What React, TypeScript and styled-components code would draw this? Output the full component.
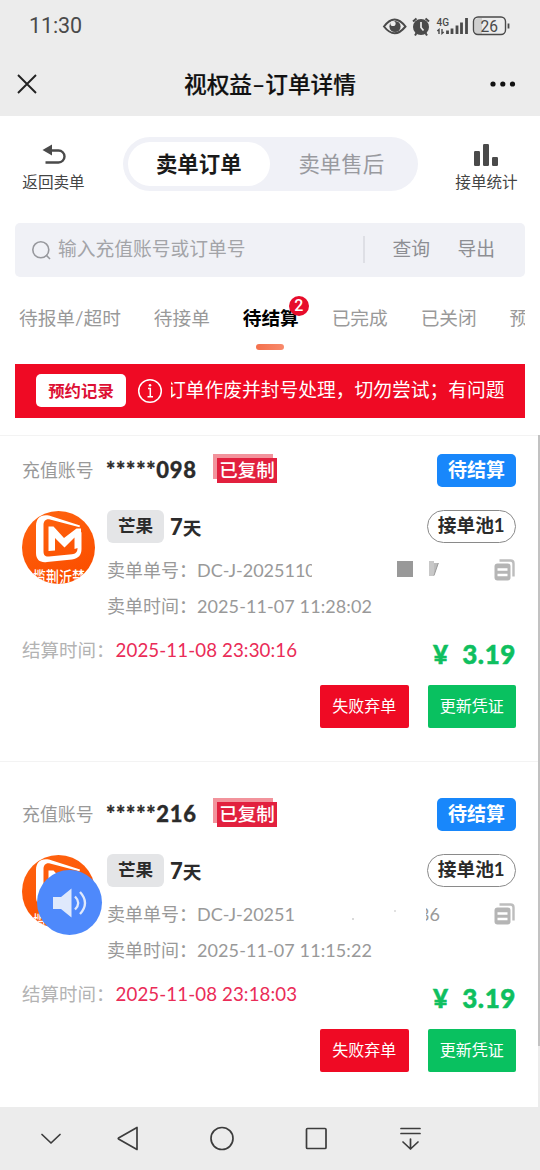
import React from "react";
import styled, { createGlobalStyle, css } from "styled-components";

const GlobalStyle = createGlobalStyle`
  * { box-sizing: border-box; }
  html, body { margin: 0; padding: 0; background: #fff; }
  body { font-family: Lato, "Noto Sans CJK SC", sans-serif; color: #2b2b2b; overflow: hidden; }
  button { font: inherit; border: 0; padding: 0; background: none; }
`;

const Screen = styled.div`
  width: 540px;
  height: 1170px;
  display: flex;
  flex-direction: column;
  overflow: hidden;
  background: #fff;
`;

const StatusBar = styled.div`
  height: 52px;
  flex: none;
  display: flex;
  align-items: center;
  justify-content: space-between;
  padding: 0 30px 0 29px;
  background: #ececec;
  color: #4a4a4a;
`;

const Clock = styled.span`
  font-family: Roboto, sans-serif;
  font-size: 21.5px;
  letter-spacing: -0.1px;
  line-height: 54px;
`;

const StatusIcons = styled.div`
  display: flex;
  align-items: center;
  height: 50px;
`;

const TitleBar = styled.header`
  height: 64px;
  flex: none;
  display: grid;
  grid-template-columns: 60px 1fr 60px;
  align-items: center;
  background: #ececec;
`;

const PageTitle = styled.h1`
  margin: 0;
  text-align: center;
  font-size: 22.7px;
  font-weight: 500;
  line-height: 59px;
  color: #111;
  -webkit-text-stroke: 0.2px #111;
`;

const TitleIcon = styled.div<{ $end?: boolean }>`
  display: flex;
  justify-content: ${(p) => (p.$end ? "flex-end" : "flex-start")};
  padding: ${(p) => (p.$end ? "0 24px 0 0" : "0 0 0 17px")};
`;

const Toolbar = styled.div`
  height: 107px;
  flex: none;
  display: flex;
  align-items: flex-start;
  justify-content: space-between;
  padding: 21px 22px 0;
`;

const ToolButton = styled.button`
  display: flex;
  flex-direction: column;
  align-items: center;
  padding-top: 6px;
  width: 63px;
  font-size: 15.6px;
  line-height: 22px;
  color: #444;
  white-space: nowrap;
  svg { margin-bottom: 2px; }
`;

const Segmented = styled.div`
  display: flex;
  width: 295px;
  height: 54px;
  padding: 5px;
  border-radius: 27px;
  background: #f0f1f7;
`;

const Segment = styled.button<{ $active?: boolean }>`
  width: 142.5px;
  height: 44px;
  border-radius: 22px;
  font-size: 21.4px;
  line-height: 42px;
  ${(p) =>
    p.$active
      ? css`background: #fff; color: #1a1a1a; font-weight: 700;`
      : css`color: #999a9f;`}
`;

const SearchBar = styled.div`
  flex: none;
  display: flex;
  align-items: center;
  height: 53.5px;
  margin: 0 15px;
  padding-left: 16px;
  border-radius: 5px;
  background: #f0f1f6;
  font-size: 18.75px;
  line-height: 50px;
  color: #a3a4a8;
`;

const Placeholder = styled.span`
  width: 305px;
  margin-left: 6px;
  padding-bottom: 2px;
`;

const Divider = styled.i`
  width: 1.5px;
  height: 27px;
  background: #dedfe5;
`;

const SearchAction = styled.button`
  width: 37px;
  margin-left: 28px;
  padding-bottom: 2px;
  color: #8d8e93;
  white-space: nowrap;
`;

const Tabs = styled.nav`
  flex: none;
  display: flex;
  height: 87px;
  margin-right: 15px;
  padding-left: 19px;
  overflow: hidden;
  gap: 32.9px;
`;

const Tab = styled.div<{ $active?: boolean }>`
  position: relative;
  flex: none;
  display: flex;
  flex-direction: column;
  align-items: center;
  padding-top: 28px;
  font-size: 18.7px;
  line-height: 26px;
  white-space: nowrap;
  color: ${(p) => (p.$active ? "#000" : "#999")};
  font-weight: ${(p) => (p.$active ? 700 : 400)};
`;

const Underline = styled.i`
  width: 28px;
  height: 6px;
  margin: 13px 2px 0 0;
  border-radius: 3px;
  background: linear-gradient(90deg, #f4704c, #f88a6c);
`;

const CountBadge = styled.b`
  position: absolute;
  right: -10px;
  top: 19px;
  width: 20px;
  height: 20px;
  border-radius: 50%;
  background: #e70c2b;
  color: #fff;
  font: 500 16px/20px Roboto, sans-serif;
  text-align: center;
`;

const Notice = styled.div`
  flex: none;
  display: flex;
  align-items: center;
  height: 54px;
  margin: 0 15px 17px;
  padding-left: 21px;
  background: #ef0a24;
  color: #fff;
`;

const NoticeButton = styled.button`
  width: 90px;
  height: 33px;
  border-radius: 5px;
  background: #fff;
  color: #dd1034;
  font-size: 16.4px;
  font-weight: 700;
  line-height: 31px;
`;

const InfoMark = styled.svg`
  margin-left: 11px;
`;

const Marquee = styled.div`
  display: flex;
  justify-content: flex-end;
  width: 333.5px;
  margin-left: 8px;
  overflow: hidden;
  font-size: 18.75px;
  line-height: 50px;
  padding-bottom: 2px;
  white-space: nowrap;
`;

const ListArea = styled.main`
  flex: 1;
  display: flex;
  min-height: 0;
`;

const List = styled.div`
  width: 537.5px;
  flex: none;
`;

const ScrollTrack = styled.div`
  flex: 1;
  background: #ececec;
`;

const ScrollThumb = styled.div`
  height: 611px;
  background: #c2c2c2;
`;

const Card = styled.article`
  height: 326px;
  padding: 18.5px 21.5px 0 22px;
  border-top: 1px solid #f3f3f3;
  & + & { padding-top: 36.5px; height: 346px; }
`;

const CardHead = styled.div`
  display: flex;
  align-items: center;
  height: 33px;
`;

const AccountLabel = styled.span`
  width: 84px;
  font-size: 17.9px;
  line-height: 33px;
  color: #999;
`;

const Account = styled.strong`
  width: 111px;
  font-size: 22px;
  font-weight: 900;
  letter-spacing: 0.7px;
  line-height: 30px;
  padding-bottom: 2px;
  color: #2b2b2b;
  -webkit-text-stroke: 0.3px #2b2b2b;
`;

const CopiedStamp = styled.span`
  width: 60px;
  height: 25px;
  margin-top: -1px;
  background: #e2203e;
  box-shadow: -4px -4px 0 #f2939c;
  color: #fff;
  font-size: 18.5px;
  font-weight: 500;
  line-height: 24px;
  text-align: center;
`;

const StateTag = styled.span`
  width: 79px;
  height: 33px;
  margin-left: auto;
  border-radius: 5px;
  background: #1887fb;
  color: #fff;
  font-size: 19px;
  font-weight: 700;
  line-height: 31px;
  text-align: center;
`;

const Product = styled.div`
  display: flex;
  margin-top: 23px;
  height: 114px;
`;

const AvatarBox = styled.div`
  position: relative;
  width: 73px;
  height: 73px;
  margin: 1px 12px 0 0;
  svg { display: block; }
`;

const VoiceBubble = styled.div`
  position: absolute;
  left: 15px;
  top: 15px;
  width: 65px;
  height: 65px;
  border-radius: 50%;
  background: #4e89fb;
  display: flex;
  align-items: center;
  justify-content: center;
`;

const Details = styled.div`
  flex: 1;
`;

const NameRow = styled.div`
  display: flex;
  align-items: center;
  height: 33px;
  margin-bottom: 8.5px;
  font-weight: 700;
`;

const Brand = styled.span`
  width: 57px;
  height: 33px;
  border-radius: 6px;
  background: #e4e5e7;
  font-size: 17.6px;
  line-height: 31px;
  text-align: center;
`;

const Term = styled.span`
  margin-left: 6px;
  font-size: 18.7px;
  font-weight: 700;
  line-height: 33px;
  padding-top: 2px;
  span { font-size: 22px; font-weight: 900; }
`;

const Pool = styled.span`
  width: 89.5px;
  height: 33px;
  margin-left: auto;
  border: 1px solid #8a8a8a;
  border-radius: 17px;
  font-size: 18.7px;
  line-height: 29px;
  text-align: center;
`;

const InfoLine = styled.div`
  display: flex;
  align-items: center;
  height: 36px;
  font-size: 18px;
  line-height: 34px;
  color: #999;
`;

const InfoLabel = styled.span`
  width: 90px;
  flex: none;
  white-space: nowrap;
`;

const Stamp = styled.span`
  white-space: nowrap;
  letter-spacing: 0.1px;
`;

const Cut = styled.span<{ $w: number; $end?: boolean }>`
  display: flex;
  justify-content: ${(p) => (p.$end ? "flex-end" : "flex-start")};
  width: ${(p) => p.$w}px;
  overflow: hidden;
  white-space: nowrap;
`;

const CopyIcon = styled.svg`
  margin-left: auto;
`;

const Settle = styled.div`
  display: flex;
  justify-content: space-between;
  height: 52px;
  margin-top: 9px;
  font-size: 18.5px;
  line-height: 35px;
  color: #b3b3b3;
`;

const SettleLabel = styled.span`
  display: inline-block;
  width: 93.5px;
  white-space: nowrap;
`;

const SettleTime = styled.span`
  color: #ea2c57;
  font-size: 18.7px;
  letter-spacing: 0.1px;
`;

const Price = styled.strong`
  color: #0fbf5f;
  font-size: 26px;
  font-weight: 900;
  letter-spacing: 0.6px;
  line-height: 43px;
  white-space: pre;
  -webkit-text-stroke: 0.5px #0fbf5f;
`;

const Actions = styled.div`
  display: flex;
  justify-content: flex-end;
  gap: 19px;
`;

const ActionButton = styled.button<{ $tone: string }>`
  width: 88.5px;
  height: 43px;
  border-radius: 2px;
  background: ${(p) => p.$tone};
  color: #fff;
  font-size: 16px;
  line-height: 40px;
  padding-bottom: 2px;
`;

const NavBar = styled.footer`
  height: 63px;
  flex: none;
  background: #ececec;
  svg { display: block; }
`;

function StatusGlyphs() {
  return (
    <svg width="128" height="26" viewBox="0 0 128 26" fill="none" stroke="#4a4a4a">
      <path d="M2 13.500Q12.500-.5 23.500 13.500Q12.500 27 2 13.500Z" strokeWidth="2" />
      <circle cx="13" cy="13.500" r="5.600" fill="#4a4a4a" stroke="none" />
      <circle cx="11" cy="10.500" r="2.600" fill="#ececec" stroke="none" />
      <circle cx="39" cy="14" r="8" fill="#4a4a4a" stroke="none" />
      <path d="M31 8.500L34.500 5.500M47 8.500L43.500 5.500M33 22.500L34.500 20M45 22.500L43.500 20" strokeWidth="2" />
      <path d="M39 9V14.500L41.500 17.500" stroke="#ececec" strokeWidth="1.700" />
      <text x="54.500" y="12.500" fontFamily="Roboto" fontSize="11" fontWeight="500" textLength="12.500" lengthAdjust="spacingAndGlyphs" fill="#4a4a4a" stroke="none">4G</text>
      <path d="M57 21V16.500L55.300 18M60 16V20.500L61.700 19" strokeWidth="1.400" />
      <path d="M65.500 21V17.500M70 21V15.500M75 21V12.500M79.500 21V9.500M84.500 21V5" strokeWidth="2.800" />
      <path d="M97 5H100V22H97Q92.500 22 92.500 18V9Q92.500 5 97 5Z" fill="#cfcfcf" stroke="none" />
      <rect x="91.500" y="4" width="32" height="17.500" rx="4.500" strokeWidth="1.400" />
      <path d="M126.500 10.500V15.500" strokeWidth="1.800" />
      <text x="98.500" y="18.700" fontFamily="Roboto" fontSize="16" textLength="17.500" lengthAdjust="spacingAndGlyphs" fill="#4a4a4a" stroke="none">26</text>
    </svg>
  );
}

function BrandAvatar() {
  return (
    <svg width="73" height="73" viewBox="0 0 73 73">
      <defs>
        <linearGradient id="orange" x1="0" y1="0" x2="0.4" y2="1">
          <stop offset="0" stopColor="#ff6410" />
          <stop offset="1" stopColor="#fb4f00" />
        </linearGradient>
        <clipPath id="disc"><circle cx="36.500" cy="36.500" r="36.500" /></clipPath>
      </defs>
      <g clipPath="url(#disc)">
        <rect width="73" height="73" fill="url(#orange)" />
        <path
          d="M58 14.500L27 4.500C19 3 14 7 14 15V42C14 49 18.500 52 25 51L50 48.500C56.500 47.500 59.500 44 59.500 38V21L55.500 25V37C55.500 41 53.500 43 50 43.300L27 45.500C23 45.800 21.500 44 21.500 40V14C21.500 10 24 7.500 28 8.500L57.500 16.200Z"
          fill="#fff"
        />
        <path d="M26.500 40V15.500H31.500L42 27L54.500 17.500H59V36L52.500 38V26.500L42.500 36.500L33 27V39.500Z" fill="#fff" />
        <text x="11" y="73" fontFamily="Noto Sans CJK SC" fontSize="17" fontWeight="500" textLength="52" lengthAdjust="spacingAndGlyphs" fill="#fff">揽荆沂楚</text>
      </g>
    </svg>
  );
}

type Order = {
  account: string;
  created: string;
  settled: string;
  number: React.ReactNode;
  voice?: boolean;
};

const orders: Order[] = [
  {
    account: "*****098",
    created: "2025-11-07 11:28:02",
    settled: "2025-11-08 23:30:16",
    number: (
      <>
        <Cut $w={115}>DC-J-2025110</Cut>
        <svg width="128" height="20" viewBox="0 0 128 20">
          <rect x="85" y="1" width="16" height="16" fill="#999" />
          <rect x="117" y="1" width="5" height="15" fill="#c8c8c8" />
          <path d="M122 3H126.500L122 15Z" fill="#bcbcbc" />
          <path d="M126.300 3L122 15.500" stroke="#999" strokeWidth="1" />
        </svg>
      </>
    ),
  },
  {
    account: "*****216",
    created: "2025-11-07 11:15:22",
    settled: "2025-11-08 23:18:03",
    voice: true,
    number: (
      <>
        <Cut $w={99}>DC-J-20251</Cut>
        <svg width="130" height="20" viewBox="0 0 130 20">
          <circle cx="57" cy="15" r=".8" fill="#aaa" />
          <circle cx="99" cy="7" r=".8" fill="#bbb" />
        </svg>
        <Cut $w={14} $end>36</Cut>
      </>
    ),
  },
];

function OrderCard({ order }: { order: Order }) {
  return (
    <Card>
      <CardHead>
        <AccountLabel>充值账号</AccountLabel>
        <Account>{order.account}</Account>
        <CopiedStamp>已复制</CopiedStamp>
        <StateTag>待结算</StateTag>
      </CardHead>
      <Product>
        <AvatarBox>
          <BrandAvatar />
          {order.voice && (
            <VoiceBubble>
              <svg width="36" height="32" viewBox="0 0 36 32">
                <path d="M1 10H9L19.500 1.500V30.500L9 22H1Z" fill="#dfe9fc" />
                <path d="M23 9.500Q29.500 16 23 22.500M28 5Q38 16 28 27" fill="none" stroke="#dfe9fc" strokeWidth="2.300" />
              </svg>
            </VoiceBubble>
          )}
        </AvatarBox>
        <Details>
          <NameRow>
            <Brand>芒果</Brand>
            <Term><span>7</span>天</Term>
            <Pool>接单池1</Pool>
          </NameRow>
          <InfoLine>
            <InfoLabel>卖单单号：</InfoLabel>
            {order.number}
            <CopyIcon width="22" height="24" viewBox="0 0 22 24">
              <path d="M5.500 2.500H16.500Q19.500 2.500 19.500 5.500V18.500" fill="none" stroke="#bdbdbd" strokeWidth="2.400" />
              <rect x="0.500" y="5.500" width="16" height="17" rx="3" fill="#b5b5b5" />
              <path d="M3.500 11.500H13.500M3.500 17H13.500" stroke="#fff" strokeWidth="2.700" />
            </CopyIcon>
          </InfoLine>
          <InfoLine>
            <InfoLabel>卖单时间：</InfoLabel>
            <Stamp>{order.created}</Stamp>
          </InfoLine>
        </Details>
      </Product>
      <Settle>
        <div>
          <SettleLabel>结算时间：</SettleLabel>
          <SettleTime>{order.settled}</SettleTime>
        </div>
        <Price>¥  3.19</Price>
      </Settle>
      <Actions>
        <ActionButton $tone="#ef0a24">失败弃单</ActionButton>
        <ActionButton $tone="#09c160">更新凭证</ActionButton>
      </Actions>
    </Card>
  );
}

export default function App() {
  return (
    <Screen>
      <GlobalStyle />
      <StatusBar>
        <Clock>11:30</Clock>
        <StatusIcons><StatusGlyphs /></StatusIcons>
      </StatusBar>
      <TitleBar>
        <TitleIcon>
          <svg width="20" height="20" viewBox="0 0 20 20" stroke="#222" strokeWidth="1.900">
            <path d="M1 1L19 19M19 1L1 19" />
          </svg>
        </TitleIcon>
        <PageTitle>视权益–订单详情</PageTitle>
        <TitleIcon $end>
          <svg width="26" height="6" viewBox="0 0 26 6" fill="#111">
            <circle cx="3" cy="3" r="2.600" />
            <circle cx="12.800" cy="3" r="2.600" />
            <circle cx="22.500" cy="3" r="2.600" />
          </svg>
        </TitleIcon>
      </TitleBar>
      <Toolbar>
        <ToolButton>
          <svg width="26" height="26" viewBox="0 0 26 26">
            <path d="M9 7.500H17.500A5.600 5.600 0 0 1 17.500 19.500H4.500" fill="none" stroke="#4a4a4a" strokeWidth="2.400" />
            <path d="M1.500 7L11 1.500V12.500Z" fill="#4a4a4a" />
          </svg>
          返回卖单
        </ToolButton>
        <Segmented>
          <Segment $active>卖单订单</Segment>
          <Segment>卖单售后</Segment>
        </Segmented>
        <ToolButton>
          <svg width="26" height="26" viewBox="0 0 26 26" fill="#4a4a4a">
            <rect x="0" y="8" width="6" height="15" rx="1.200" />
            <rect x="9" y="1" width="6" height="22" rx="1.200" />
            <rect x="18" y="14" width="6" height="9" rx="1.200" />
          </svg>
          接单统计
        </ToolButton>
      </Toolbar>
      <SearchBar>
        <svg width="21" height="20" viewBox="0 0 21 20" fill="none" stroke="#97989d" strokeWidth="1.600">
          <circle cx="9.800" cy="9.800" r="8" />
          <path d="M15 15L19 19" />
        </svg>
        <Placeholder>输入充值账号或订单号</Placeholder>
        <Divider />
        <SearchAction>查询</SearchAction>
        <SearchAction>导出</SearchAction>
      </SearchBar>
      <Tabs>
        <Tab>待报单/超时</Tab>
        <Tab>待接单</Tab>
        <Tab $active>
          待结算
          <Underline />
          <CountBadge>2</CountBadge>
        </Tab>
        <Tab>已完成</Tab>
        <Tab>已关闭</Tab>
        <Tab>预约</Tab>
      </Tabs>
      <Notice>
        <NoticeButton>预约记录</NoticeButton>
        <InfoMark width="26" height="26" viewBox="0 0 26 26" fill="none" stroke="#fff">
          <circle cx="13" cy="13" r="11.300" strokeWidth="1.500" />
          <path d="M11 10.500H13.300V18.500M10.500 18.800H16" strokeWidth="1.500" />
          <circle cx="13" cy="7.200" r="1.300" fill="#fff" stroke="none" />
        </InfoMark>
        <Marquee>订单作废并封号处理，切勿尝试；有问题</Marquee>
      </Notice>
      <ListArea>
        <List>
          {orders.map((o) => (
            <OrderCard key={o.account} order={o} />
          ))}
        </List>
        <ScrollTrack><ScrollThumb /></ScrollTrack>
      </ListArea>
      <NavBar>
        <svg width="540" height="63" viewBox="0 0 540 63" fill="none" stroke="#3c3c3c" strokeWidth="1.700" strokeLinejoin="round" strokeLinecap="round">
          <path d="M42 27.500L51 36L60 27.500" />
          <path d="M137 20.500V42.500L118.500 32Q118 31.500 118.500 31Z" />
          <circle cx="222" cy="31.500" r="11" />
          <rect x="306.500" y="21.500" width="19.500" height="20" rx="1" />
          <path d="M401 21.500H420M401 26.500H420M410.500 32V42M403 35L410.500 42L418 35" />
        </svg>
      </NavBar>
    </Screen>
  );
}
